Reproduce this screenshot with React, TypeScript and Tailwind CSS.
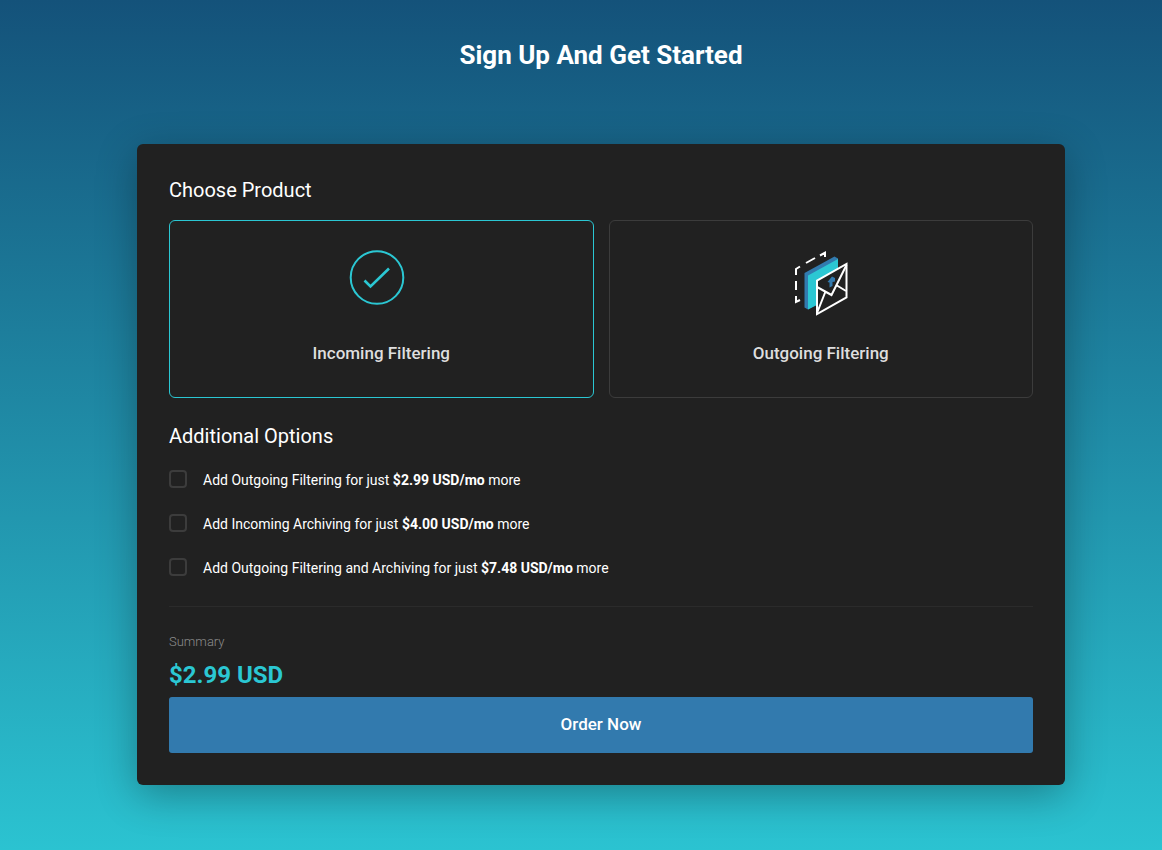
import { useState } from 'react';

interface Option {
  id: string;
  label: string;
  price: string;
}

const options: Option[] = [
  { id: 'outgoing', label: 'Add Outgoing Filtering for just', price: '$2.99 USD/mo' },
  { id: 'archiving', label: 'Add Incoming Archiving for just', price: '$4.00 USD/mo' },
  { id: 'both', label: 'Add Outgoing Filtering and Archiving for just', price: '$7.48 USD/mo' },
];

function CheckIcon() {
  return (
    <svg width="64" height="68" viewBox="0 0 64 68" fill="none" stroke="#2bc7d3" aria-hidden="true">
      <circle cx="28" cy="28.5" r="26.3" strokeWidth="2" />
      <path d="M15.500 31.500 21.500 37.500 40 19.500" strokeWidth="2.6" />
    </svg>
  );
}

function OutgoingIcon() {
  return (
    <svg width="64" height="68" viewBox="0 1 64 68" fill="none" aria-hidden="true">
      <path
        d="M11 52 7 54v-6M7 42v-9M7 27v-6l4-2.500M17 15l9-5M31 7.500l5-2.700V9"
        stroke="#fff"
        strokeWidth="2"
      />
      <path d="M15.500 25 45.500 8.500 49 10.500V46L19 61.500 15.500 59.500Z" fill="#327aae" />
      <path d="M19 27.500 49 11V46L19 61.500Z" fill="#2bc7d3" />
      <path d="M28 32.700 57.500 16v33.300L28 66Z" fill="#212121" stroke="#fff" strokeWidth="2" />
      <path d="M28 39 42.500 47 57.500 17M36.500 43.500 28 65M48 37.500l9 5.500" stroke="#fff" strokeWidth="2" />
      <path d="M38.500 34 43 28.500l3 1.500v3.500l-2.500.5v4l-3 1.500V34.500Z" fill="#327aae" />
    </svg>
  );
}

const products = [
  { id: 'incoming', name: 'Incoming Filtering', icon: <CheckIcon /> },
  { id: 'outgoing', name: 'Outgoing Filtering', icon: <OutgoingIcon /> },
];

export default function App() {
  const [product, setProduct] = useState('incoming');
  const [checked, setChecked] = useState<string[]>([]);

  const toggle = (id: string) => {
    setChecked(checked.includes(id) ? checked.filter(c => c !== id) : [...checked, id]);
  };

  return (
    <div className="min-h-screen bg-linear-to-b/srgb from-[#14527a] to-[#2bc3d1] pl-10 pb-16 font-[Roboto,sans-serif] text-white">
      <h1 className="pt-9 text-center text-[26px] leading-[38px] font-bold">Sign Up And Get Started</h1>

      <main className="mx-auto mt-[70px] max-w-[928px] rounded-md bg-[#212121] p-8 shadow-[0_10px_40px_rgba(0,0,0,0.3)]">
        <h2 className="text-xl">Choose Product</h2>
        <div className="mt-4 grid grid-cols-2 gap-[15px]">
          {products.map(p => (
            <button
              key={p.id}
              type="button"
              aria-pressed={product === p.id}
              onClick={() => setProduct(p.id)}
              className={`flex flex-col items-center rounded-md border pt-7 pb-8 ${
                product === p.id ? 'border-[#2bc7d3]' : 'border-[#3c3c3c]'
              }`}
            >
              {p.icon}
              <span className="mt-6 text-[17px] leading-6 font-medium text-[#dedede]">{p.name}</span>
            </button>
          ))}
        </div>

        <h2 className="mt-6 text-xl">Additional Options</h2>
        <div className="mt-5 space-y-6">
          {options.map(o => (
            <label key={o.id} className="flex items-start gap-4 text-sm">
              <input
                type="checkbox"
                checked={checked.includes(o.id)}
                onChange={() => toggle(o.id)}
                className="size-[18px] shrink-0 appearance-none rounded-sm border-2 border-[#3c3c3c] checked:bg-[#2bc7d3]"
              />
              <span>
                {o.label} <strong className="font-bold">{o.price}</strong> more
              </span>
            </label>
          ))}
        </div>

        <hr className="mt-7 border-[#2b2b2b]" />

        <p className="mt-6 text-[13px] leading-[22px] font-light text-[#8c8c8c]">Summary</p>
        <p className="mt-1.5 text-2xl font-bold text-[#2bc7d3]">$2.99 USD</p>
        <button type="button" className="mt-1.5 h-14 w-full rounded-[3px] bg-[#327aae] text-[17px] font-medium">
          Order Now
        </button>
      </main>
    </div>
  );
}
